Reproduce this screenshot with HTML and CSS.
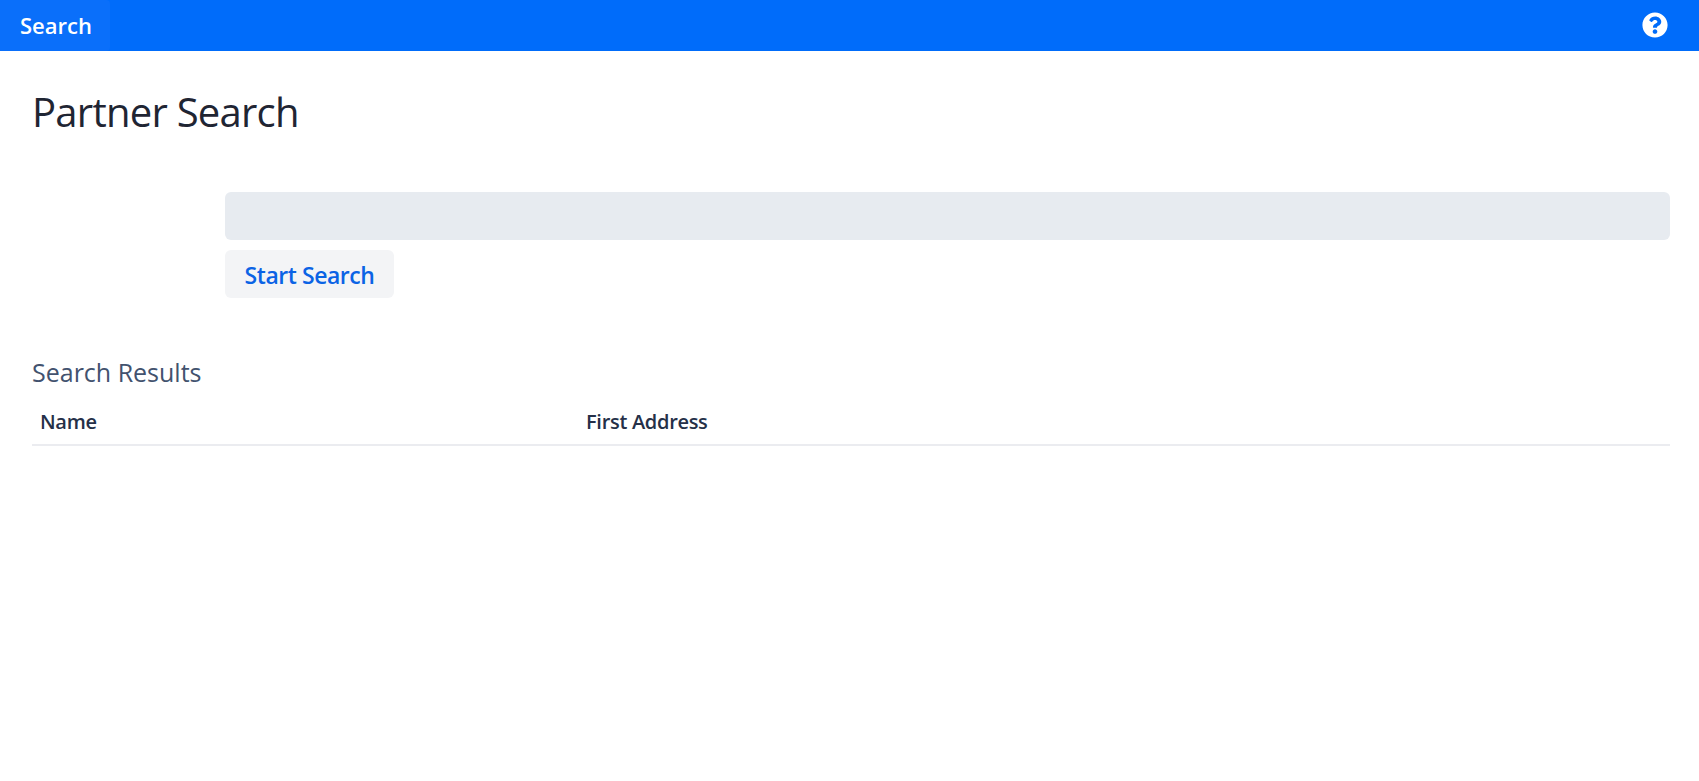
FILE: index.html
```html
<!DOCTYPE html>
<html lang="en">
<head>
<meta charset="utf-8">
<title>Partner Search</title>
<link rel="stylesheet" href="styles.css">
</head>
<body>
<nav class="navbar">
  <a class="nav-tab">Search</a>
  <svg class="help-icon" viewBox="0 0 512 512" width="26" height="26" aria-label="Help"><path fill="#fff" d="M504 256c0 137-111 248-248 248S8 393 8 256C8 119 119 8 256 8s248 111 248 248zM262.700 90c-54.500 0-89.300 23-116.600 63.800-3.500 5.300-2.400 12.400 2.700 16.300l34.700 26.300c5.200 3.900 12.600 3 16.700-2.100 17.900-22.700 30.100-35.800 57.300-35.800 20.400 0 45.700 13.100 45.700 32.900 0 15-12.400 22.700-32.500 34-23.500 13.200-54.600 29.600-54.600 70.700V300c0 6.600 5.400 12 12 12h56c6.600 0 12-5.400 12-12v-1.300c0-28.500 83.200-29.700 83.200-106.700 0-58-60.200-102-116.600-102zM256 338c-25.400 0-46 20.600-46 46 0 25.400 20.600 46 46 46s46-20.600 46-46c0-25.400-20.600-46-46-46z"/></svg>
</nav>
<main class="content">
  <h1 class="page-title">Partner Search</h1>
  <section class="search-form">
    <div class="search-input"></div>
    <button class="search-button" type="button">Start Search</button>
  </section>
  <h2 class="results-title">Search Results</h2>
  <div class="results-head">
    <div class="col-name">Name</div>
    <div class="col-address">First Address</div>
  </div>
</main>
</body>
</html>
```
FILE: styles.css
```css
* { box-sizing: border-box; }
html, body { margin: 0; padding: 0; background: #fff; }
body { font-family: "Open Sans", "Noto Sans", sans-serif; color: #212529; }
.navbar {
  height: 51px;
  background: #006cfa;
  display: flex;
  align-items: center;
  justify-content: space-between;
  padding-right: 31px;
}
.nav-tab {
  height: 51px;
  width: 110px;
  padding: 0 0 2px 20px;
  display: flex;
  align-items: center;
  background: #0a6ffa;
  border-radius: 0 4px 4px 0;
  color: #fff;
  font-size: 22px;
  font-weight: 600;
  letter-spacing: 0;
}
.help-icon { display: block; margin-bottom: 1px; }
.content { padding: 37px 29px 0 32px; }
.page-title {
  margin: 0;
  height: 48px;
  font-size: 40px;
  line-height: 48px;
  font-weight: 400;
  letter-spacing: -0.75px;
  color: #1f2533;
}
.search-form { margin: 56px 0 0 193px; display: flex; flex-direction: column; align-items: flex-start; gap: 10px; }
.search-input { width: 100%; height: 48px; background: #e7ebf0; border-radius: 6px; }
.search-button {
  width: 169px;
  height: 48px;
  padding: 2px 0 0;
  border: 0;
  border-radius: 6px;
  background: #f3f4f6;
  color: #0b63e5;
  font-family: inherit;
  font-size: 23px;
  font-weight: 600;
  letter-spacing: -0.45px;
}
.results-title {
  margin: 58px 0 0;
  font-size: 25px;
  line-height: 32px;
  font-weight: 400;
  color: #42526e;
}
.results-head {
  margin-top: 15px;
  height: 43px;
  display: grid;
  grid-template-columns: 546px 1fr;
  border-bottom: 2px solid #ebecf0;
  font-size: 20px;
  font-weight: 600;
  line-height: 38px;
  color: #253048;
  letter-spacing: -0.3px;
}
.col-name, .col-address { padding-left: 8px; }
```
